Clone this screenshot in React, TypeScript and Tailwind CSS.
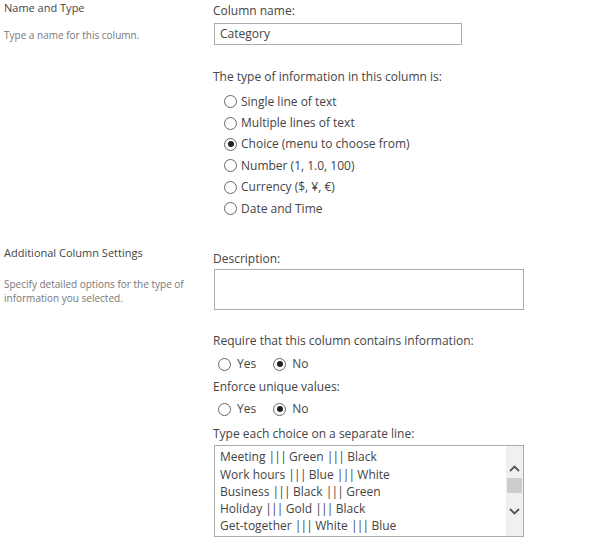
import React from "react";

const FONT = "font-['Segoe_UI','Open_Sans',sans-serif]";

function Radio({ checked }: { checked?: boolean }) {
  return (
    <span className="flex h-[13px] w-[13px] shrink-0 items-center justify-center rounded-full border border-[#666] bg-white">
      {checked && <span className="h-[6px] w-[6px] rounded-full bg-[#222]" />}
    </span>
  );
}

const TYPES = [
  { label: "Single line of text" },
  { label: "Multiple lines of text" },
  { label: "Choice (menu to choose from)", checked: true },
  { label: "Number (1, 1.0, 100)" },
  { label: "Currency ($, ¥, €)" },
  { label: "Date and Time" },
];

const CHOICES = [
  ["Meeting", "Green", "Black"],
  ["Work hours", "Blue", "White"],
  ["Business", "Black", "Green"],
  ["Holiday", "Gold", "Black"],
  ["Get-together", "White", "Blue"],
];

function Pipes() {
  return (
    <>
      {" "}
      <span className="tracking-[-0.8px]">|||</span>{" "}
    </>
  );
}

function YesNo() {
  return (
    <div className="ml-[5px] flex h-[22px] items-center text-[12px] text-[#444]">
      <Radio />
      <span className="ml-[6px]">Yes</span>
      <span className="ml-[17px]">
        <Radio checked />
      </span>
      <span className="ml-[6px]">No</span>
    </div>
  );
}

export default function App() {
  return (
    <div className={`${FONT} h-[557px] w-[615px] overflow-hidden bg-white`}>
      {/* Name and Type */}
      <div className="flex">
        <div className="w-[213px] pl-[4px]">
          <div className="mt-[1px] text-[11px] leading-[14px] text-[#444]">Name and Type</div>
          <div className="mt-[13px] text-[10px] leading-[14px] text-[#777]">Type a name for this column.</div>
        </div>
        <div className="flex-1">
          <div className="mt-[2px] text-[12px] leading-[18px] text-[#444]">Column name:</div>
          <div className="ml-[1px] mt-[3px] flex h-[22px] w-[248px] items-center border border-[#ababab] pl-[5px] text-[12px] text-[#444]">
            Category
          </div>
          <div className="mt-[23px] text-[12px] leading-[18px] text-[#444]">
            The type of information in this column is:
          </div>
          <div className="ml-[11px] mt-[5px]">
            {TYPES.map((t) => (
              <div key={t.label} className="flex h-[21.4px] items-center text-[12px] text-[#444]">
                <Radio checked={t.checked} />
                <span className="ml-[4px]">{t.label}</span>
              </div>
            ))}
          </div>
        </div>
      </div>

      {/* Additional Column Settings */}
      <div className="mt-[26px] flex">
        <div className="w-[213px] pl-[4px]">
          <div className="text-[11px] leading-[16px] text-[#444]">Additional Column Settings</div>
          <div className="mt-[16px] w-[192px] text-[10px] leading-[14px] text-[#777]">
            Specify detailed options for the type of information you selected.
          </div>
        </div>
        <div className="flex-1">
          <div className="mt-[5px] text-[12px] leading-[18px] text-[#444]">Description:</div>
          <div className="ml-[1px] mt-[1px] h-[41px] w-[310px] border border-[#ababab]" />
          <div className="mt-[22px] text-[12px] leading-[18px] text-[#444]">
            Require that this column contains information:
          </div>
          <div className="mt-[3px]">
            <YesNo />
          </div>
          <div className="mt-[3px] text-[12px] leading-[18px] text-[#444]">Enforce unique values:</div>
          <div className="mt-[2px]">
            <YesNo />
          </div>
          <div className="mt-[5px] text-[12px] leading-[18px] text-[#444]">Type each choice on a separate line:</div>
          <div className="ml-[1px] mt-[2px] flex h-[92px] w-[310px] border border-[#ababab]">
            <div className="flex-1 pl-[5px] pt-[2px] text-[12px] leading-[17.25px] text-[#444]">
              {CHOICES.map(([a, b, c]) => (
                <div key={a}>
                  {a}
                  <Pipes />
                  {b}
                  <Pipes />
                  {c}
                </div>
              ))}
            </div>
            <div className="flex w-[17px] flex-col items-center bg-[#f0f0f0]">
              <svg className="mt-[19px]" width="11" height="7" viewBox="0 0 11 7">
                <path d="M1 6 L5.5 1.5 L10 6" fill="none" stroke="#555" strokeWidth="1.8" />
              </svg>
              <div className="mt-[6px] h-[15px] w-[15px] bg-[#cdcdcd]" />
              <svg className="mt-[15px]" width="11" height="7" viewBox="0 0 11 7">
                <path d="M1 1 L5.5 5.5 L10 1" fill="none" stroke="#555" strokeWidth="1.8" />
              </svg>
            </div>
          </div>
        </div>
      </div>
    </div>
  );
}
